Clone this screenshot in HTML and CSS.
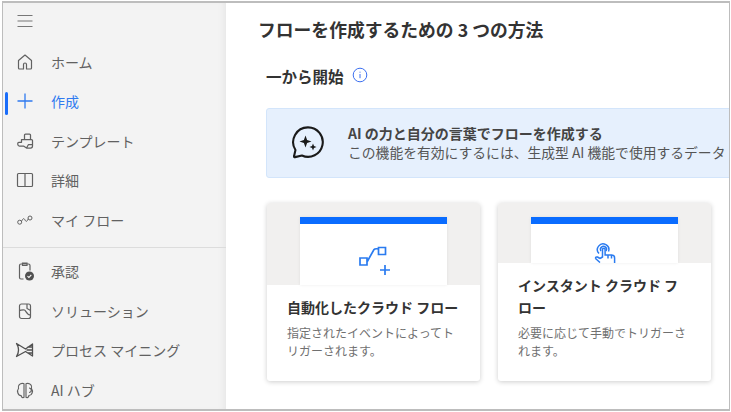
FILE: index.html
```html
<!DOCTYPE html>
<html lang="ja">
<head>
<meta charset="utf-8">
<title>作成</title>
<link rel="stylesheet" href="styles.css">
</head>
<body>
<div class="window">
  <nav class="sidebar">
    <div class="menu-row">
      <svg class="ico" width="20" height="20" viewBox="0 0 20 20"><path d="M2.500 4.500h15M2.500 10h15M2.500 15.500h15" stroke="#777" fill="none" stroke-width="1.100"/></svg>
    </div>
    <ul class="nav-list">
      <li class="nav-item"><svg class="ico" width="20" height="20" viewBox="0 0 20 20"><path d="M8.500 17H4.500a1 1 0 0 1-1-1V8.500L10 3l6.500 5.500V16a1 1 0 0 1-1 1h-4v-4.500a1.500 1.500 0 0 0-3 0z" stroke="#616161" fill="none" stroke-width="1.200" stroke-linejoin="round"/></svg><span>ホーム</span></li>
      <li class="nav-item active"><svg class="ico" width="20" height="20" viewBox="0 0 20 20"><path d="M10 2.500v15M2.500 10h15" stroke="#2f7af0" fill="none" stroke-width="1.300"/></svg><span>作成</span></li>
      <li class="nav-item"><svg class="ico" width="20" height="20" viewBox="0 0 20 20"><path d="M2.800 12.300c0-.6.400-1 1-1H6.500V8.500H9.500V4a1 1 0 0 1 1-1h4a1 1 0 0 1 1 1v4.500h1a1 1 0 0 1 1 1v5.500a2 2 0 0 1-2 2H11.500L8.500 15H4.500a1.700 1.700 0 0 1-1.700-1.500zM9.500 8.500h6M11.500 17l2-3.500h4" stroke="#616161" fill="none" stroke-width="1.250" stroke-linejoin="round"/></svg><span>テンプレート</span></li>
      <li class="nav-item"><svg class="ico" width="20" height="20" viewBox="0 0 20 20"><path d="M2.500 4.500a1 1 0 0 1 1-1h13a1 1 0 0 1 1 1v11a1 1 0 0 1-1 1h-13a1 1 0 0 1-1-1zM10 3.500v13" stroke="#616161" fill="none" stroke-width="1.200"/></svg><span>詳細</span></li>
      <li class="nav-item"><svg class="ico" width="20" height="20" viewBox="0 0 20 20"><circle cx="4.700" cy="12.200" r="2" stroke="#616161" fill="none"/><circle cx="15" cy="8" r="2" stroke="#616161" fill="none"/><path d="M6.500 11.500C8 8 9 8 10 10s2 2 3.200-1.300" stroke="#616161" fill="none"/></svg><span>マイ フロー</span></li>
    </ul>
    <hr class="divider">
    <ul class="nav-list">
      <li class="nav-item"><svg class="ico" width="20" height="20" viewBox="0 0 20 20"><path d="M8.500 18H6a1.500 1.500 0 0 1-1.500-1.500v-12A1.500 1.500 0 0 1 6 3h7.500A1.500 1.500 0 0 1 15 4.500v5M7.500 2h4.500v2.500H7.500z" stroke="#616161" fill="none" stroke-width="1.200"/><circle cx="14.500" cy="15" r="4.500" fill="#505050"/><path d="M12.500 15.200l1.400 1.300 2.400-2.700" stroke="#fff" fill="none" stroke-width="1.100"/></svg><span>承認</span></li>
      <li class="nav-item"><svg class="ico" width="20" height="20" viewBox="0 0 20 20"><path d="M4.500 5a2 2 0 0 1 2-2h7a2 2 0 0 1 2 2v10.500a2 2 0 0 1-2 2h-7a2 2 0 0 1-2-2zM4.500 9.500c2.500-.5 3.500-1 5-.5s2 5 6 5M12 3v4.500l3.500 2" stroke="#616161" fill="none" stroke-width="1.200"/></svg><span>ソリューション</span></li>
      <li class="nav-item"><svg class="ico" width="20" height="20" viewBox="0 0 20 20"><path d="M1.500 3.500L10.500 9l7-5v12l-7-4.500-9 5c2.500-4 2.500-9 0-13zM17.500 7h-5M17.500 10h-6M17.500 13h-4.500" stroke="#505050" fill="none" stroke-width="1.300" stroke-linejoin="round"/></svg><span>プロセス マイニング</span></li>
      <li class="nav-item"><svg class="ico" width="20" height="20" viewBox="0 0 20 20"><path d="M8.500 3.500C5 2.500 2.500 6 3.500 8.500 1.500 11 3 15.500 6 15.500c.5 2 2 2.500 3 1.800V3.800zM11.500 3.500c3.500-1 6 2.500 5 5 2 2.500.5 7-2.500 7-.5 2-2 2.500-3 1.800V3.800zM14 8a2 2 0 0 1 0 4.500" stroke="#616161" fill="none" stroke-width="1.150"/></svg><span>AI ハブ</span></li>
    </ul>
  </nav>
  <main class="content">
    <h1 class="page-title">フローを作成するための 3 つの方法</h1>
    <div class="section">
      <h2 class="section-title">一から開始
        <svg class="info" width="16" height="16" viewBox="0 0 16 16"><circle cx="8" cy="8" r="6.800" stroke="#3b6ff0" fill="none" stroke-width="1"/><path d="M8 7v4.200M8 4.700v1" stroke="#3b6ff0" fill="none"/></svg>
      </h2>
      <div class="banner">
        <svg class="banner-ico" width="36" height="36" viewBox="0 0 36 36"><path d="M18 2.500a15.500 15.500 0 1 1-6.500 29.600l-7.300 1.700a.8.800 0 0 1-1-1l1.500-6.500A15.500 15.500 0 0 1 18 2.500z" transform="translate(1 0) scale(.95)" stroke="#1a1a1a" fill="none" stroke-width="2.200" stroke-linejoin="round"/><path d="M15.500 10.500l1.600 4.400 4.400 1.600-4.400 1.600-1.600 4.400-1.600-4.400-4.400-1.600 4.400-1.600z" fill="#1a1a1a"/><path d="M23 18.500l1 2.500 2.500 1-2.500 1-1 2.500-1-2.500-2.500-1 2.500-1z" fill="#1a1a1a"/></svg>
        <div class="banner-text">
          <p class="banner-title">AI の力と自分の言葉でフローを作成する</p>
          <p class="banner-desc">この機能を有効にするには、生成型 AI 機能で使用するデータ</p>
        </div>
      </div>
      <div class="cards">
        <article class="card">
          <div class="thumb thumb-tall">
            <div class="panel">
              <svg width="34" height="34" viewBox="0 0 34 34"><path d="M3 16h7v7H3zM21.500 5.500h7v7h-7zM10 20l7-12.500q1-1.200 4.500-.5" stroke="#2a7bf0" fill="none" stroke-width="1.700"/><path d="M28 23v10M23 28h10" stroke="#2a7bf0" fill="none" stroke-width="1.700"/></svg>
            </div>
          </div>
          <div class="card-body">
            <h3 class="card-title">自動化したクラウド フロー</h3>
            <p class="card-desc">指定されたイベントによってトリガーされます。</p>
          </div>
        </article>
        <article class="card">
          <div class="thumb thumb-short">
            <div class="panel">
              <svg class="touch" width="24" height="22" viewBox="0 0 24 22"><path d="M6 11.500a5.700 5.700 0 1 1 9.500-2" stroke="#2a7bf0" fill="none" stroke-width="1.500"/><path d="M8 9a3 3 0 1 1 5 0" stroke="#2a7bf0" fill="none" stroke-width="1.500"/><path d="M2.500 16.500l4.500 4M7 16.500l2.500-1.500V7.500a1.300 1.300 0 0 1 2.600 0V13h6.500c2 0 3 1.200 3 3v5M15 13v3.500M18.500 13v3.500M7 16.500l-2.500-1.500q-2-.5-2 1.500" stroke="#2a7bf0" fill="none" stroke-width="1.500"/></svg>
            </div>
          </div>
          <div class="card-body">
            <h3 class="card-title">インスタント クラウド フロー</h3>
            <p class="card-desc">必要に応じて手動でトリガーされます。</p>
          </div>
        </article>
      </div>
    </div>
  </main>
</div>
</body>
</html>
```

FILE: styles.css
```css
* { box-sizing: border-box; }
html, body { margin: 0; height: 100%; background: #fff; }
body { padding: 1px 1px 1px 2px; font-family: "Noto Sans CJK JP", "Noto Sans", sans-serif; overflow: hidden; }
.window { display: flex; height: 100%; border: 1px solid #bdbdbd; border-top-width: 2px; border-bottom-width: 2px; overflow: hidden; background: #fff; }
.sidebar { width: 223px; flex: none; background: #f3f3f3; box-shadow: inset -6px 0 6px -4px #e6e6e6; overflow: hidden; }
.menu-row { height: 39px; padding: 8px 0 0 12px; }
.ico { flex: none; }
.nav-list { list-style: none; margin: 0; padding: 0; }
.nav-item { display: flex; align-items: center; gap: 16px; height: 39.5px; padding-left: 12px; font-size: 14px; color: #616161; position: relative; white-space: nowrap; }
.nav-item.active { color: #2f7af0; }
.nav-item.active::before { content: ""; position: absolute; left: 2px; top: 10px; width: 3px; height: 23px; border-radius: 2px; background: #1a6dfa; }
.divider { margin: 7px 0 4px; border: 0; border-top: 1px solid #dcdcdc; }
.content { flex: 1; min-width: 0; padding: 13px 0 0 32px; overflow: hidden; }
.page-title { margin: 0; font-size: 17.800px; line-height: 26px; font-weight: 700; color: #333; white-space: nowrap; }
.section { margin: 0 0 0 8px; }
.section-title { display: flex; align-items: center; gap: 8px; margin: 22px 0 0; font-size: 15.500px; line-height: 24px; font-weight: 700; color: #333; }
.info { margin-bottom: 3px; }
.banner { display: flex; align-items: center; gap: 22px; margin-top: 20px; height: 70px; width: 480px; padding-left: 23px; background: #e6f0fd; border: 1px solid #d3e5fb; border-radius: 3px; overflow: hidden; }
.banner-ico { flex: none; }
.banner-text { min-width: 0; white-space: nowrap; }
.banner-title { margin: 0; font-size: 14px; line-height: 19px; font-weight: 700; color: #444; }
.banner-desc { margin: 0; font-size: 13.800px; line-height: 19px; color: #555; }
.cards { display: flex; gap: 18px; margin: 25px 0 0 1px; }
.card { width: 213px; height: 178px; background: #fff; border-radius: 3px; box-shadow: 0 1px 5px rgba(0,0,0,.2); overflow: hidden; }
.thumb { display: flex; justify-content: center; background: #f1f0ef; padding-top: 14px; }
.thumb-tall { height: 82px; }
.thumb-short { height: 60px; }
.panel { width: 147px; display: flex; justify-content: center; align-items: flex-start; padding-top: 18px; background: #fff; border-top: 7px solid #0a6cff; overflow: hidden; box-shadow: 0 0 3px rgba(0,0,0,.08); }
.card-body { padding: 11px 20px 0; }
.card-title { margin: 0; font-size: 14px; line-height: 22px; font-weight: 700; color: #333; }
.card-desc { margin: 6px 0 0; font-size: 12px; line-height: 18px; color: #707070; }
```
